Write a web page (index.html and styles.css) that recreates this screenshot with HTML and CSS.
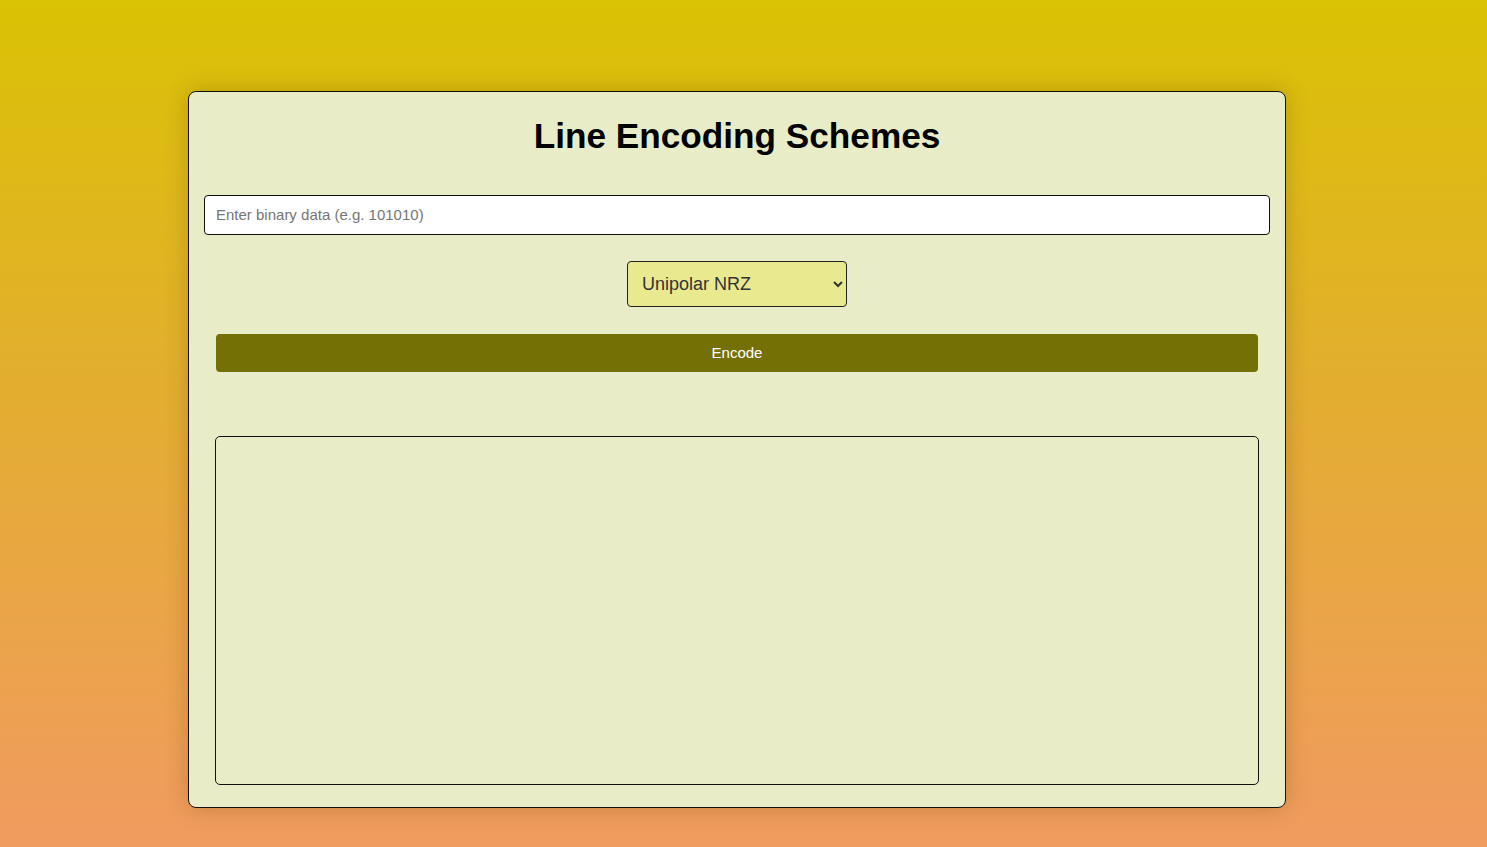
FILE: index.html
```html
<!DOCTYPE html>
<html lang="en">
<head>
<meta charset="utf-8">
<title>Line Encoding Schemes</title>
<link rel="stylesheet" href="styles.css">
</head>
<body>
<main class="card">
  <h1 class="title">Line Encoding Schemes</h1>
  <input class="data-input" type="text" placeholder="Enter binary data (e.g. 101010)">
  <div class="select-row">
    <select class="scheme">
      <option>Unipolar NRZ</option>
      <option>Polar NRZ</option>
      <option>Manchester</option>
    </select>
  </div>
  <div class="inner">
    <button class="encode">Encode</button>
    <div class="canvas-box"></div>
  </div>
</main>
</body>
</html>
```
FILE: styles.css
```css
html { height: 100%; }
body {
  margin: 0;
  min-height: 100%;
  font-family: "Liberation Sans", Arial, sans-serif;
  background: linear-gradient(180deg, #dac204 0%, #e3ae2f 45%, #f19b60 100%);
  padding: 91px 13px 40px 0;
  box-sizing: border-box;
}
.card {
  width: 1098px;
  box-sizing: border-box;
  margin: 0 auto;
  background: #e8edc8;
  border: 1px solid #111;
  border-radius: 8px;
  box-shadow: 0 0 22px rgba(90, 60, 0, 0.28);
  padding: 24px 15px 22px;
  display: flex;
  flex-direction: column;
}
.title {
  margin: 0 0 39px;
  text-align: center;
  font-size: 35.2px;
  font-weight: bold;
  color: #000;
}
.data-input {
  height: 40px;
  box-sizing: border-box;
  border: 1px solid #111;
  border-radius: 4px;
  background: #fff;
  padding: 0 11px 1px;
  font-family: "Liberation Sans", Arial, sans-serif;
  font-size: 15px;
  color: #222;
  margin: 0 0 26px;
}
.data-input::placeholder { color: #757575; }
.select-row {
  display: flex;
  justify-content: center;
  margin-bottom: 27px;
}
.scheme {
  width: 220px;
  height: 46px;
  box-sizing: border-box;
  border: 1px solid #222;
  border-radius: 4px;
  background: #e9e98f;
  font-family: "Liberation Sans", Arial, sans-serif;
  font-size: 18px;
  color: #333;
  padding: 0 10px;
}
.inner {
  padding: 0 11px;
  display: flex;
  flex-direction: column;
}
.encode {
  margin: 0 1px 64px;
  height: 38px;
  border: none;
  border-radius: 4px;
  background: #747006;
  color: #fff;
  font-family: "Liberation Sans", Arial, sans-serif;
  font-size: 15px;
  padding: 0 6px 2px;
}
.canvas-box {
  height: 349px;
  box-sizing: border-box;
  border: 1px solid #111;
  border-radius: 5px;
}
```
